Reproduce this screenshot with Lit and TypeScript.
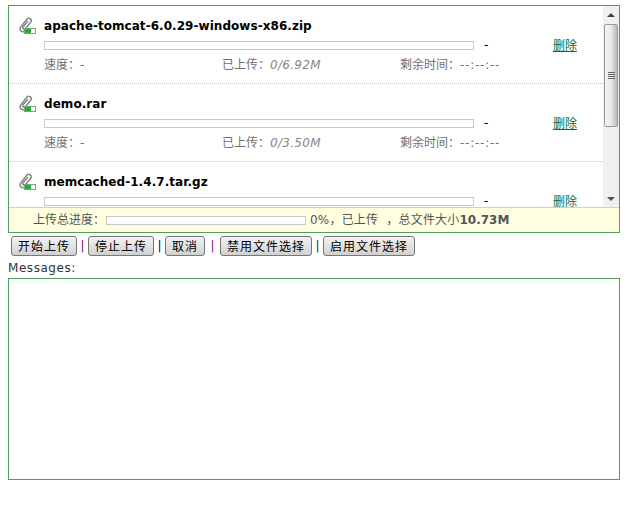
import { LitElement, html, css, svg } from "lit";
import { customElement } from "lit/decorators.js";

const FONT = css`"DejaVu Sans", Verdana, "Noto Sans CJK SC", sans-serif`;

const clip = html`<svg class="icon" width="18" height="18" viewBox="0 0 18 18">
  ${svg`<path d="M7.5 14 C4.5 16 0.8 13.5 2.6 10.2 L8.6 2.4 C10.6 0.2 14.4 2 12.9 5 L7.4 11.8 C6 13 4 11.6 5.2 9.8 L10 4" fill="none" stroke="#858585" stroke-width="1.5"/>
  <rect x="6.5" y="11.5" width="11" height="5" fill="#fff" stroke="#7aa87a" stroke-width="1"/>
  <rect x="7" y="12" width="6" height="4" fill="#1fae3a"/>`}
</svg>`;

const files = [
  { name: "apache-tomcat-6.0.29-windows-x86.zip", size: "6.92M" },
  { name: "demo.rar", size: "3.50M" },
  { name: "memcached-1.4.7.tar.gz", size: "0.31M" },
];

const buttons: [string, number, string, number][] = [
  ["开始上传", 66, "#800080", 11],
  ["停止上传", 66, "#000080", 11],
  ["取消", 40, "#800080", 15],
  ["禁用文件选择", 92, "#004000", 11],
  ["启用文件选择", 92, "", 0],
];

@customElement("app-root")
export class AppRoot extends LitElement {
  static styles = css`
    :host { display: block; width: 639px; height: 506px; font: 12px/14px ${FONT}; color: #555; background: #fff; }
    .page { padding: 5px 19px 0 8px; }
    .box { border: 1px solid #4f9f5a; display: flex; flex-direction: column; height: 228px; box-sizing: border-box; }
    .top { display: flex; height: 201px; border-bottom: 1px solid #cfcfcf; }
    .list { flex: 1; overflow: hidden; }
    .row { height: 78px; box-sizing: border-box; border-bottom: 1px dotted #c4c4c4; padding: 11px 0 0 9px; display: flex; gap: 8px; }
    .icon { flex: none; }
    .info { flex: none; width: 540px; }
    .name { font-weight: bold; color: #000; line-height: 17px; margin-top: 1px; letter-spacing: 0.05px; white-space: nowrap; }
    .pline { display: flex; align-items: center; margin-top: 1px; height: 18px; }
    .bar { width: 430px; height: 9px; box-sizing: border-box; border: 1px solid #c8c8c8; background: #fff; flex: none; }
    .dash { color: #000; margin-left: 10px; width: 69px; flex: none; }
    .del { color: #0a6b34; text-decoration: underline; width: 24px; margin-top: 1px; white-space: nowrap; }
    .stats { display: flex; margin-top: 2px; height: 18px; line-height: 18px; white-space: nowrap; color: #707070; }
    .stats > div { flex: none; }
    .s1, .s2 { width: 178px; }
    .stats i { color: #888; letter-spacing: 0.3px; }
    .time { letter-spacing: 0.75px; }
    .sb { width: 16px; flex: none; background: #f0f0f0; display: flex; flex-direction: column; align-items: center; }
    .up, .down { height: 17px; width: 16px; display: flex; align-items: center; justify-content: center; flex: none; }
    .tri-u { width: 0; height: 0; border: 4px solid transparent; border-top: 0; border-bottom: 4px solid #444; }
    .tri-d { width: 0; height: 0; border: 4px solid transparent; border-bottom: 0; border-top: 4px solid #555; }
    .thumb { width: 14px; height: 103px; margin-top: 1px; box-sizing: border-box; border: 1px solid #9a9a9a; border-radius: 2px;
      background: linear-gradient(to right, #f4f4f4, #e8e8e8 50%, #b8b8b8); display: flex; flex-direction: column; align-items: center; justify-content: center; gap: 1px; }
    .thumb span { width: 7px; height: 1px; background: #666; }
    .gap { flex: 1; }
    .total { flex: 1; background: #ffffe0; display: flex; align-items: center; padding-left: 24px; color: #555; white-space: nowrap; }
    .tbar { width: 200px; height: 9px; box-sizing: border-box; border: 1px solid #c8c8c8; background: #fff; margin: 0 4px 0 1px; flex: none; }
    .total .pct { letter-spacing: 0.2px; }
    .total b { letter-spacing: 0; }
    .btns { display: flex; align-items: center; height: 20px; margin: 3px 0 0 3px; }
    button { height: 20px; box-sizing: border-box; padding: 0; font: 12px/16px "Noto Sans CJK SC", ${FONT}; color: #000; border: 1px solid #777; border-radius: 3px;
      background: linear-gradient(#f4f4f4, #d0d0d0); letter-spacing: 1px; flex: none; }
    .sep { text-align: center; flex: none; line-height: 14px; }
    .msg { color: #333; margin-top: 5px; height: 17px; line-height: 14px; letter-spacing: 0.55px; }
    .out { border: 1px solid #4f9f5a; height: 202px; box-sizing: border-box; }
  `;

  render() {
    return html`<div class="page">
      <div class="box">
        <div class="top">
          <div class="list">
            ${files.map((f) => html`<div class="row">
              ${clip}
              <div class="info">
                <div class="name">${f.name}</div>
                <div class="pline"><div class="bar"></div><div class="dash">-</div><a class="del">删除</a></div>
                <div class="stats">
                  <div class="s1">速度：-</div>
                  <div class="s2">已上传：<i>0/${f.size}</i></div>
                  <div>剩余时间：<span class="time">--:--:--</span></div>
                </div>
              </div>
            </div>`)}
          </div>
          <div class="sb">
            <div class="up"><div class="tri-u"></div></div>
            <div class="thumb"><span></span><span></span><span></span><span></span></div>
            <div class="gap"></div>
            <div class="down"><div class="tri-d"></div></div>
          </div>
        </div>
        <div class="total">
          <span>上传总进度：</span><div class="tbar"></div><span class="pct">0%，已上传&nbsp;&nbsp;，总文件大小<b>10.73M</b></span>
        </div>
      </div>
      <div class="btns">
        ${buttons.map(([t, w, c, g]) => html`<button style="width:${w}px">${t}</button>${c ? html`<span class="sep" style="color:${c};width:${g}px">|</span>` : ""}`)}
      </div>
      <div class="msg">Messages:</div>
      <div class="out"></div>
    </div>`;
  }
}
